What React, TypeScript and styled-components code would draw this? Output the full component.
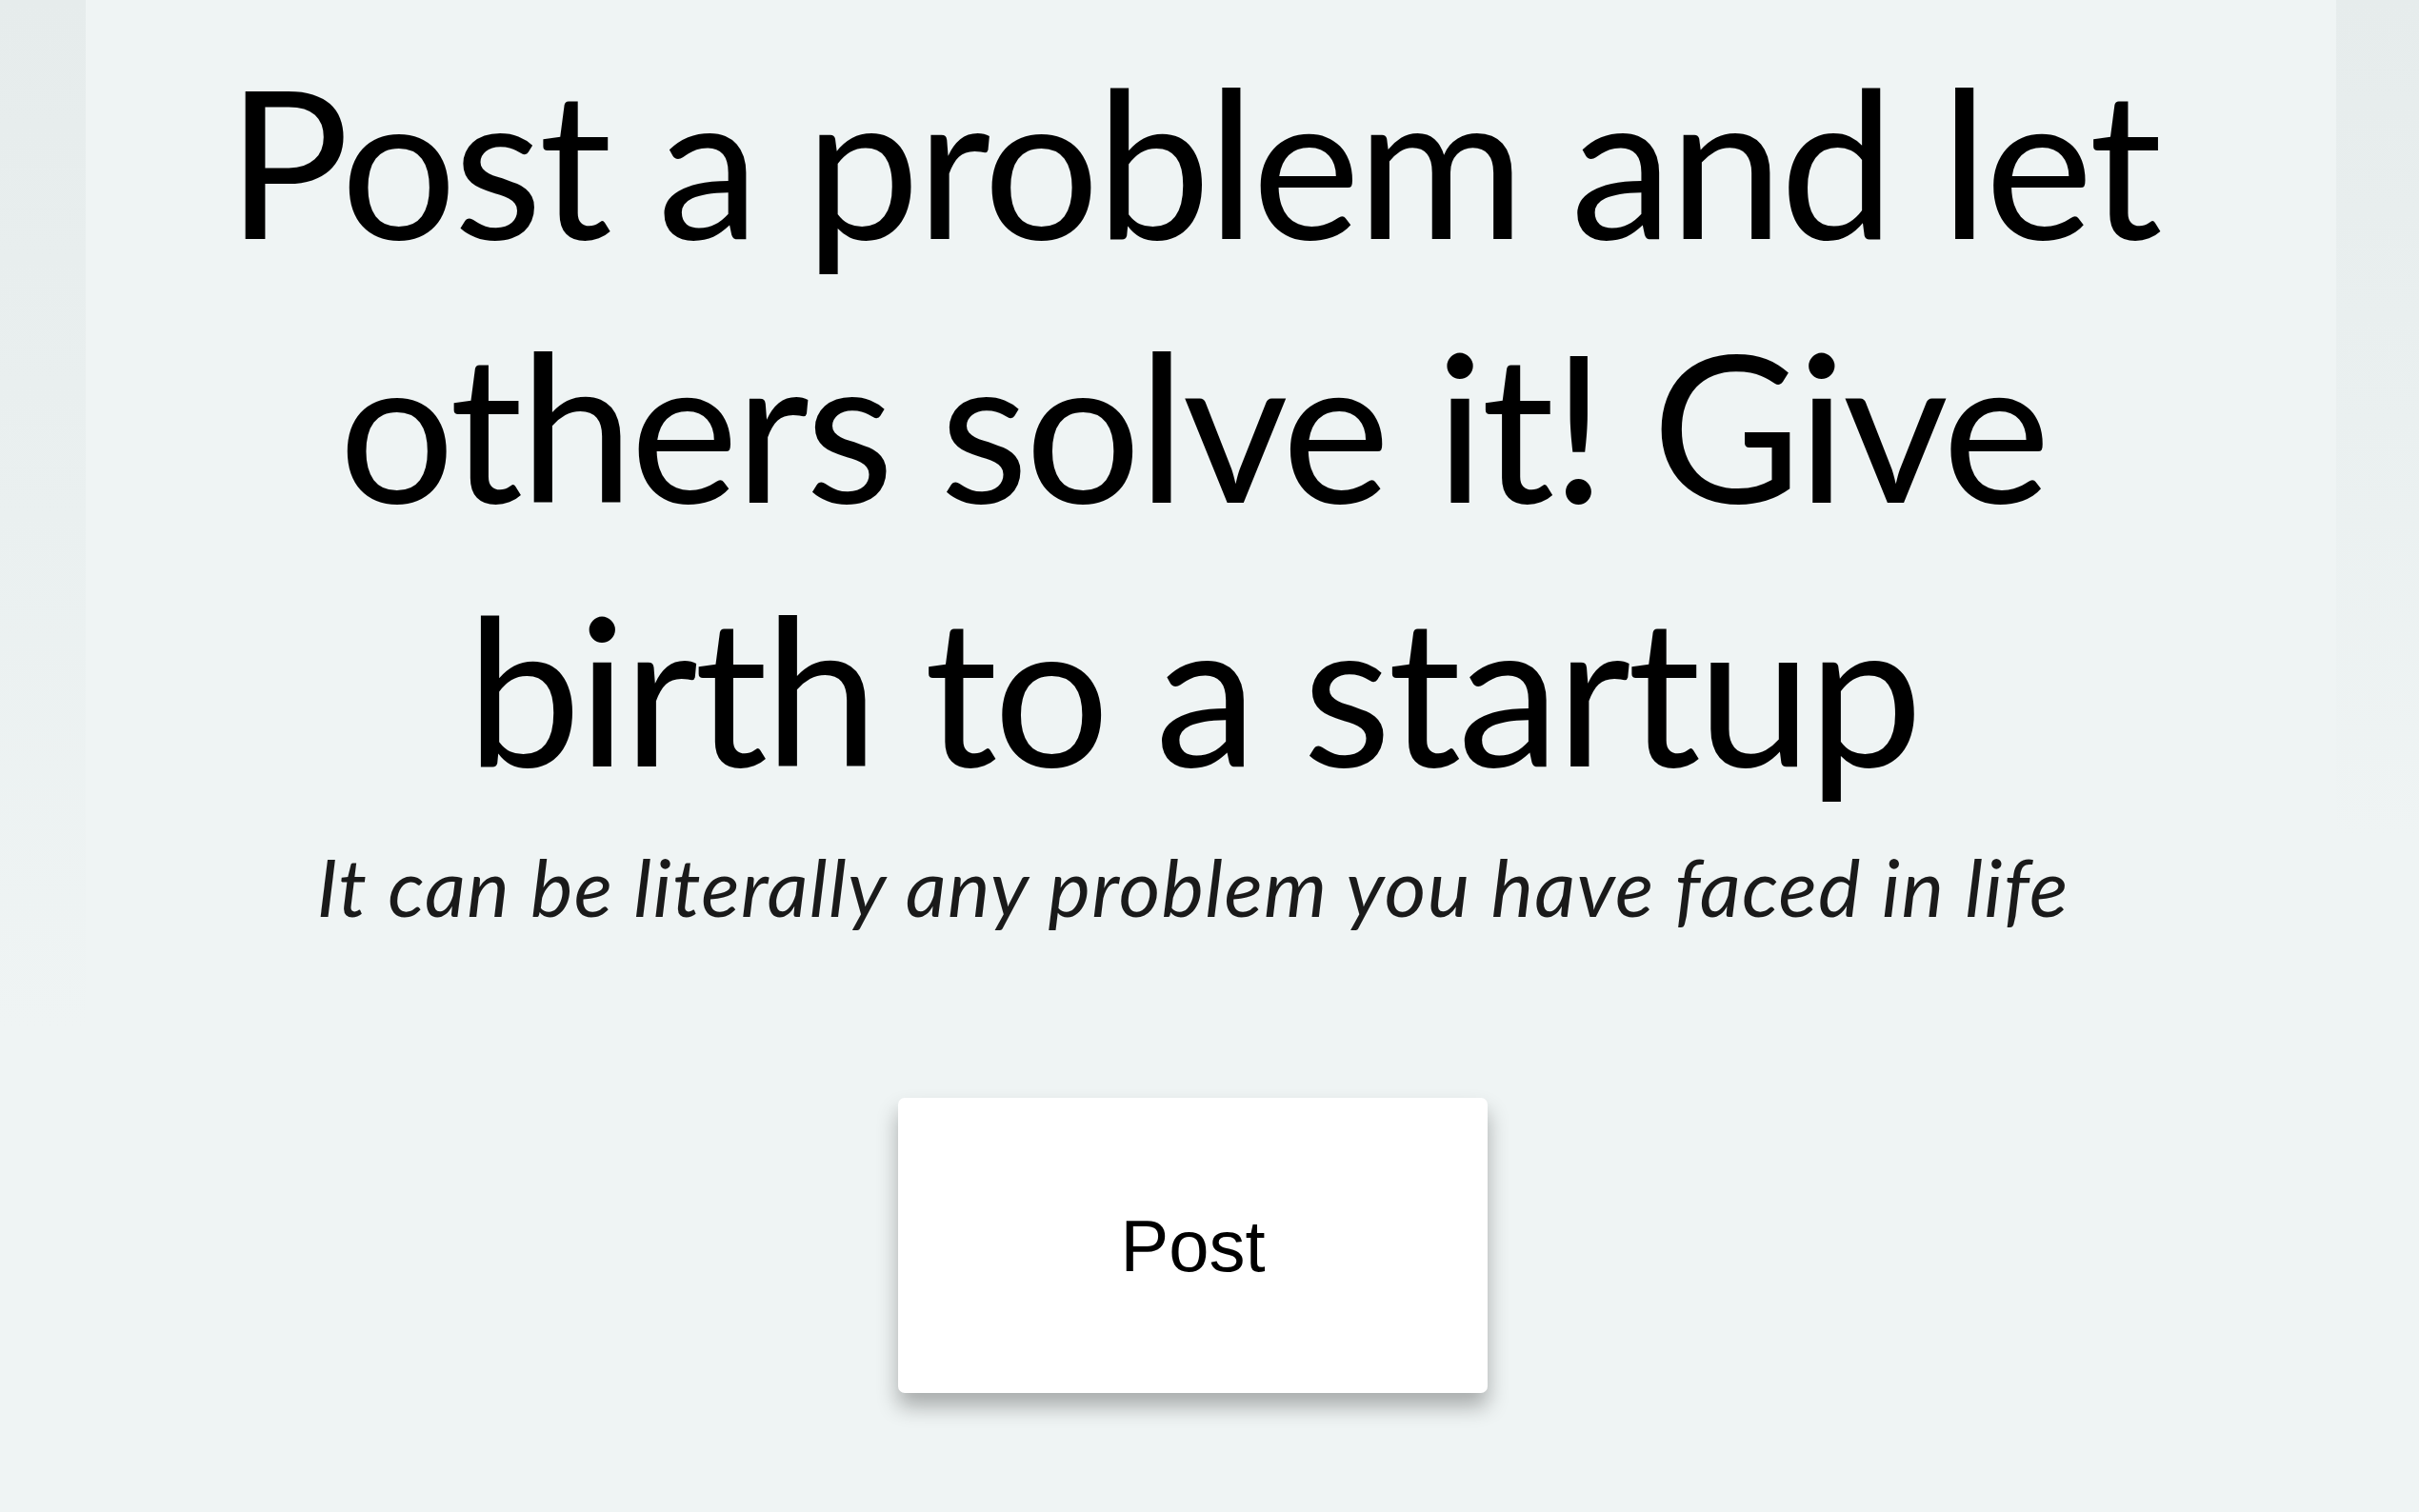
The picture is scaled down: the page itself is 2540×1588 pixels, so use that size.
import React from 'react';
import styled, {createGlobalStyle} from 'styled-components';

const GlobalStyle = createGlobalStyle`
  html, body {
    margin: 0;
    padding: 0;
    background: #eff4f4;
  }
  body {
    font-family: Lato, "Noto Sans", sans-serif;
  }
`;

const Page = styled.div`
  width: 100%;
  height: 1588px;
  display: flex;
  flex-direction: row;
  overflow: hidden;
`;

const Side = styled.div<{$w: number; $fade: number}>`
  width: ${(p) => p.$w}px;
  flex-shrink: 0;
  background: linear-gradient(
    to bottom,
    #e6ecec 0px,
    #eaf0f0 ${(p) => p.$fade / 2}px,
    #eff4f4 ${(p) => p.$fade}px
  );
`;

const Main = styled.main`
  flex: 1;
  display: flex;
  flex-direction: column;
  align-items: center;
  padding: 30px 38px 0 0;
  background: #eff4f4;
`;

const Heading = styled.h1`
  margin: 0;
  max-width: 2120px;
  font-size: 215px;
  font-weight: 400;
  line-height: 277px;
  letter-spacing: -3.6px;
  color: #000;
  text-align: center;
`;

const Subtitle = styled.p`
  margin: 19px 0 0;
  font-size: 84px;
  font-style: italic;
  font-weight: 400;
  line-height: 101px;
  letter-spacing: 1.3px;
  color: #1a1a1a;
  text-align: center;
`;

const ButtonRow = styled.div`
  margin-top: 172px;
  display: flex;
  justify-content: center;
`;

const PostBtn = styled.button`
  width: 619px;
  height: 310px;
  border: none;
  border-radius: 7px;
  background: #fff;
  box-shadow: 0 14px 22px rgba(0, 0, 0, 0.3);
  font-family: "Liberation Sans", Arial, sans-serif;
  font-size: 76px;
  color: #000;
  cursor: pointer;
`;

export default function App() {
  return (
    <>
      <GlobalStyle />
      <Page>
        <Side $w={90} $fade={1080} />
        <Main>
          <Heading>Post a problem and let others solve it! Give birth to a startup</Heading>
          <Subtitle>It can be literally any problem you have faced in life</Subtitle>
          <ButtonRow>
            <PostBtn>Post</PostBtn>
          </ButtonRow>
        </Main>
        <Side $w={87} $fade={880} />
      </Page>
    </>
  );
}
